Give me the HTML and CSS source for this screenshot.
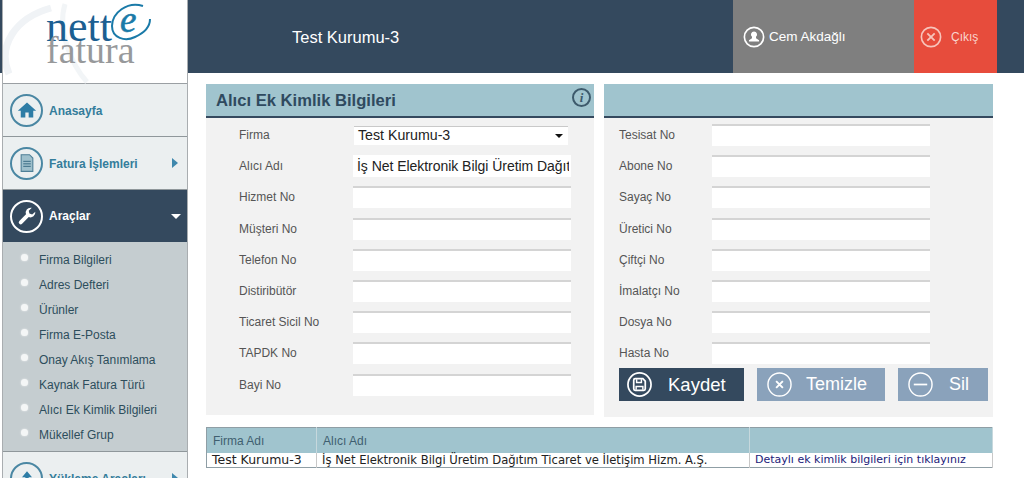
FILE: index.html
```html
<!DOCTYPE html>
<html lang="tr">
<head>
    <meta charset="UTF-8">
    <meta name="viewport" content="width=device-width, initial-scale=1.0">
    <link rel="stylesheet" href="styles.css">
    <title>Nette Fatura - Alıcı Ek Kimlik Bilgileri</title>
</head>
<body>
<div class="page">
    <aside class="sidebar">
        <div class="logo">
            <svg class="logo-swirl" viewBox="0 0 186 84" aria-hidden="true">
                <path d="M6 74C-6 46 12 18 48 8" fill="none" stroke="#f0f3f6" stroke-width="7"/>
                <path d="M62 4C54 30 68 64 84 82" fill="none" stroke="#f2f5f7" stroke-width="5"/>
                <path d="M140 6C124 1 109 13 109 26C109 38 122 42 132 37C141 33 147 27 147 19" fill="none" stroke="#1a7aa8" stroke-width="2"/>
            </svg>
            <span class="logo-nett">nett</span>
            <span class="logo-e">e</span>
            <span class="logo-fatura">fatura</span>
        </div>
        <a class="menu-item" href="#">
            <span class="menu-icon">
                <svg viewBox="0 0 24 24"><path d="M12 3 1 13h3.500v8h5.500v-6h4v6h5.500v-8H23z" fill="#2e7da6"/></svg>
            </span>
            <span class="menu-label">Anasayfa</span>
        </a>
        <a class="menu-item" href="#">
            <span class="menu-icon">
                <svg viewBox="0 0 24 24"><path d="M5 2h10l4 4v16H5z" fill="#9fc0cc" stroke="#4d7f97" stroke-width="1.300"/><path d="M7.500 10h9M7.500 13h9M7.500 16h9" stroke="#3b6d85" stroke-width="1.200"/></svg>
            </span>
            <span class="menu-label">Fatura İşlemleri</span>
            <span class="arrow-right"></span>
        </a>
        <a class="menu-item menu-item-active" href="#">
            <span class="menu-icon">
                <svg viewBox="0 0 24 24"><path d="M17 2a6 6 0 0 0-6.200 8L2.800 18a2.300 2.300 0 0 0 3.300 3.300l8-8A6 6 0 0 0 22 7l-3.800 3.200-3.300-1.100-.8-3.300L17.800 2z" fill="#fff"/></svg>
            </span>
            <span class="menu-label">Araçlar</span>
            <span class="arrow-down"></span>
        </a>
        <ul class="submenu">
            <li>Firma Bilgileri</li>
            <li>Adres Defteri</li>
            <li>Ürünler</li>
            <li>Firma E-Posta</li>
            <li>Onay Akış Tanımlama</li>
            <li>Kaynak Fatura Türü</li>
            <li>Alıcı Ek Kimlik Bilgileri</li>
            <li>Mükellef Grup</li>
        </ul>
        <a class="menu-item" href="#">
            <span class="menu-icon">
                <svg viewBox="0 0 24 24"><path d="M12 4 6 11h4v8h4v-8h4z" fill="#2e7da6"/></svg>
            </span>
            <span class="menu-label">Yükleme Araçları</span>
            <span class="arrow-right"></span>
        </a>
    </aside>

    <div class="main">
        <header class="topbar">
            <div class="topbar-title">Test Kurumu-3</div>
            <div class="topbar-user">
                <svg class="topbar-icon" viewBox="0 0 24 24"><circle cx="12" cy="12" r="10.500" fill="none" stroke="#fff" stroke-width="1.800"/><path d="M12 6a3.300 3.300 0 0 1 2.200 5.800v1.500l3.300 2.200V17h-11v-1.500l3.300-2.200v-1.500A3.300 3.300 0 0 1 12 6z" fill="#fff"/></svg>
                Cem Akdağlı
            </div>
            <div class="topbar-exit">
                <svg class="topbar-icon" viewBox="0 0 24 24"><circle cx="12" cy="12" r="10.500" fill="none" stroke="#f7c4bb" stroke-width="1.800"/><path d="M8 8l8 8M16 8l-8 8" stroke="#f7c4bb" stroke-width="2"/></svg>
                Çıkış
            </div>
        </header>

        <div class="content">
            <div class="panels">
                <section class="panel panel-left">
                    <div class="panel-head">
                        <h1>Alıcı Ek Kimlik Bilgileri</h1>
                        <span class="info-icon">i</span>
                    </div>
                    <div class="form-rows">
                        <div class="form-row"><label>Firma</label><div class="select-box">Test Kurumu-3<span class="select-arrow"></span></div></div>
                        <div class="form-row"><label>Alıcı Adı</label><input class="text-input filled" type="text" value="İş Net Elektronik Bilgi Üretim Dağıtım Ticaret ve İletişim Hizm. A.Ş."></div>
                        <div class="form-row"><label>Hizmet No</label><input class="text-input" type="text"></div>
                        <div class="form-row"><label>Müşteri No</label><input class="text-input" type="text"></div>
                        <div class="form-row"><label>Telefon No</label><input class="text-input" type="text"></div>
                        <div class="form-row"><label>Distiribütör</label><input class="text-input" type="text"></div>
                        <div class="form-row"><label>Ticaret Sicil No</label><input class="text-input" type="text"></div>
                        <div class="form-row"><label>TAPDK No</label><input class="text-input" type="text"></div>
                        <div class="form-row"><label>Bayi No</label><input class="text-input" type="text"></div>
                    </div>
                </section>

                <section class="panel panel-right">
                    <div class="panel-head"></div>
                    <div class="form-rows">
                        <div class="form-row"><label>Tesisat No</label><input class="text-input" type="text"></div>
                        <div class="form-row"><label>Abone No</label><input class="text-input" type="text"></div>
                        <div class="form-row"><label>Sayaç No</label><input class="text-input" type="text"></div>
                        <div class="form-row"><label>Üretici No</label><input class="text-input" type="text"></div>
                        <div class="form-row"><label>Çiftçi No</label><input class="text-input" type="text"></div>
                        <div class="form-row"><label>İmalatçı No</label><input class="text-input" type="text"></div>
                        <div class="form-row"><label>Dosya No</label><input class="text-input" type="text"></div>
                        <div class="form-row"><label>Hasta No</label><input class="text-input" type="text"></div>
                    </div>
                    <div class="buttons">
                        <button class="btn btn-save">
                            <svg class="btn-icon" viewBox="0 0 26 26"><circle cx="13" cy="13" r="12" fill="none" stroke="#fff" stroke-width="1.800"/><path d="M7 8.500A1.500 1.500 0 0 1 8.500 7h8l2.500 2.500v8a1.500 1.500 0 0 1-1.500 1.500h-9A1.500 1.500 0 0 1 7 17.500z" fill="none" stroke="#fff" stroke-width="1.800"/><path d="M10 7.500v3.500h5V7.500M9.500 18.500V15h7v3.500" fill="none" stroke="#fff" stroke-width="1.500"/></svg>
                            Kaydet
                        </button>
                        <button class="btn btn-clear">
                            <svg class="btn-icon" viewBox="0 0 26 26"><circle cx="13" cy="13" r="12" fill="none" stroke="#fff" stroke-width="1.500"/><path d="M9.500 9.500l7 7M16.500 9.500l-7 7" stroke="#fff" stroke-width="2"/></svg>
                            Temizle
                        </button>
                        <button class="btn btn-delete">
                            <svg class="btn-icon" viewBox="0 0 26 26"><circle cx="13" cy="13" r="12" fill="none" stroke="#fff" stroke-width="1.500"/><path d="M6 13h14" stroke="#fff" stroke-width="1.800"/></svg>
                            Sil
                        </button>
                    </div>
                </section>
            </div>

            <table class="result-table">
                <thead>
                    <tr><th class="col-firma">Firma Adı</th><th class="col-alici">Alıcı Adı</th><th></th></tr>
                </thead>
                <tbody>
                    <tr>
                        <td class="cell-firma">Test Kurumu-3</td>
                        <td class="cell-alici">İş Net Elektronik Bilgi Üretim Dağıtım Ticaret ve İletişim Hizm. A.Ş.</td>
                        <td class="detail-link">Detaylı ek kimlik bilgileri için tıklayınız</td>
                    </tr>
                </tbody>
            </table>
        </div>
    </div>
</div>
</body>
</html>
```
FILE: styles.css
```css
html, body {
    margin: 0;
    padding: 0;
    height: 478px;
    overflow: hidden;
    background: #fff;
    font-family: "Liberation Sans", Arial, sans-serif;
}
.page {
    display: flex;
    height: 478px;
    padding-left: 2px;
    box-sizing: border-box;
    background: linear-gradient(#34495e 73px, #fff 73px);
}

/* sidebar */
.sidebar {
    width: 186px;
    flex: none;
    height: 478px;
    overflow: hidden;
    box-sizing: border-box;
    border-right: 1px solid #a9adb0;
    border-left: 1px solid #a9adb0;
    background: #fff;
}
.logo {
    position: relative;
    height: 84px;
    box-sizing: border-box;
    border-bottom: 1px solid #9a9fa3;
}
.logo-swirl {
    position: absolute;
    left: 0;
    top: 0;
    width: 186px;
    height: 84px;
}
.logo-nett, .logo-fatura, .logo-e {
    position: absolute;
    font-family: "Liberation Serif", serif;
}
.logo-nett {
    left: 43px;
    top: 15px;
    font-size: 44px;
    line-height: 24px;
    color: #1b5f92;
}
.logo-fatura {
    left: 43px;
    top: 39px;
    font-size: 38px;
    line-height: 22px;
    color: #97999b;
}
.logo-e {
    left: 117px;
    top: 8px;
    font-size: 37px;
    line-height: 24px;
    font-style: italic;
    -webkit-text-stroke: 0.6px #1a7aa8;
    color: #1a7aa8;
}
.menu-item {
    display: flex;
    align-items: center;
    height: 53px;
    box-sizing: border-box;
    padding-left: 7px;
    border-bottom: 1px solid #8f979b;
    background: #ebeff0;
    color: #347d9b;
    font-size: 12px;
    font-weight: bold;
    text-decoration: none;
}
.menu-item-active {
    height: 52px;
    border-bottom: none;
    background: #34495e;
    color: #fff;
}
.menu-icon {
    display: flex;
    align-items: center;
    justify-content: center;
    width: 33px;
    height: 33px;
    flex: none;
    margin-right: 6px;
    box-sizing: border-box;
    border: 2.500px solid #4a87a3;
    border-radius: 50%;
}
.menu-item-active .menu-icon {
    border-color: #fff;
}
.menu-icon svg {
    width: 20px;
    height: 20px;
}
.menu-label {
    flex: 1;
    padding-top: 2px;
}
.menu-item-active .menu-label {
    padding-top: 0;
}
.arrow-right {
    width: 0;
    height: 0;
    margin-right: 9px;
    border-left: 6px solid #3f88ad;
    border-top: 5px solid transparent;
    border-bottom: 5px solid transparent;
}
.arrow-down {
    width: 0;
    height: 0;
    margin-right: 6px;
    border-top: 5px solid #fff;
    border-left: 5px solid transparent;
    border-right: 5px solid transparent;
}
.submenu {
    list-style: none;
    margin: 0;
    padding: 6px 0 5px;
    height: 210px;
    box-sizing: border-box;
    background: #c5cdd0;
    border-bottom: 1px solid #8f979b;
}
.submenu li {
    position: relative;
    height: 25px;
    line-height: 25px;
    padding-left: 36px;
    font-size: 12px;
    color: #2d4d5c;
}
.submenu li::before {
    content: "";
    position: absolute;
    left: 18px;
    top: 6px;
    width: 7px;
    height: 7px;
    border-radius: 50%;
    background: #f4f6f6;
    box-shadow: 0 0 2px #f4f6f6;
}

/* header */
.main {
    flex: 1;
    min-width: 0;
}
.topbar {
    display: flex;
    height: 73px;
    width: 809px;
    color: #fff;
    background: #34495e;
}
.topbar-title {
    width: 545px;
    padding-left: 104px;
    box-sizing: border-box;
    line-height: 75px;
    font-size: 16.500px;
}
.topbar-user, .topbar-exit {
    display: flex;
    align-items: center;
    box-sizing: border-box;
}
.topbar-user {
    width: 181px;
    padding-left: 10px;
    font-size: 13.500px;
    background: #7f7f7f;
}
.topbar-exit {
    width: 83px;
    padding-left: 6px;
    font-size: 12px;
    background: #e74c3c;
    color: #f9d5ce;
}
.topbar-icon {
    width: 22px;
    height: 22px;
    margin-right: 4px;
}
.topbar-exit .topbar-icon {
    margin-right: 9px;
}

/* panels */
.content {
    width: 787px;
    margin-left: 18px;
}
.panels {
    display: flex;
    gap: 10px;
    margin-top: 11px;
}
.panel {
    width: 388px;
    background: #f2f2f2;
}
.panel-left {
    height: 331px;
}
.panel-right {
    width: 389px;
    height: 333px;
}
.panel-head {
    position: relative;
    height: 34px;
    box-sizing: border-box;
    border-bottom: 2px solid #34495e;
    background: #a0c4ce;
}
.panel-head h1 {
    margin: 0;
    padding-left: 10px;
    font-size: 16.600px;
    line-height: 33px;
    color: #2f4a5f;
}
.info-icon {
    position: absolute;
    right: 3px;
    top: 4px;
    width: 15px;
    height: 15px;
    border: 2px solid #3d5a6c;
    border-radius: 50%;
    text-align: center;
    font: italic bold 13px/15px "Liberation Serif", serif;
    color: #3d5a6c;
}
.form-rows {
    display: flex;
    flex-direction: column;
    gap: 9.200px;
    padding-top: 6px;
}
.form-row {
    display: flex;
    align-items: center;
    height: 22px;
}
.form-row label {
    width: 147px;
    padding-left: 33px;
    box-sizing: border-box;
    font-size: 12px;
    color: #555;
}
.panel-right .form-row label {
    width: 108px;
    padding-left: 15px;
}
.text-input {
    width: 218px;
    height: 22px;
    padding: 0 2px 0 4px;
    box-sizing: border-box;
    border: none;
    border-top: 2px solid #d4d4d4;
    background: #fff;
    font-family: "Liberation Sans", Arial, sans-serif;
}
.filled {
    font-size: 14px;
    letter-spacing: -0.04px;
    line-height: 18px;
    border-top: none;
    color: #222;
}
.select-box {
    position: relative;
    width: 214px;
    height: 19px;
    margin-left: 1px;
    padding-left: 4px;
    box-sizing: border-box;
    border-top: 1px solid #c9c9c9;
    background: #fff;
    font-size: 14.200px;
    line-height: 17px;
    color: #222;
}
.select-arrow {
    position: absolute;
    right: 5px;
    top: 7px;
    border-top: 4px solid #111;
    border-left: 4px solid transparent;
    border-right: 4px solid transparent;
}

/* buttons */
.buttons {
    display: flex;
    gap: 13px;
    margin-top: 4px;
    padding-left: 15px;
}
.btn {
    display: flex;
    align-items: center;
    height: 33px;
    padding: 0 0 0 10px;
    border: none;
    color: #fff;
    font: 18px "Liberation Sans", Arial, sans-serif;
}
.btn-icon {
    width: 25px;
    height: 25px;
    margin-right: 16px;
}
.btn-save {
    width: 125px;
    padding-left: 8px;
    font-size: 18.500px;
    background: #34495e;
}
.btn-clear {
    width: 128px;
    background: #8aa2bb;
}
.btn-clear .btn-icon {
    margin-right: 14px;
}
.btn-delete {
    width: 90px;
    background: #8aa2bb;
}

/* table */
.result-table {
    width: 787px;
    margin-top: 10px;
    table-layout: fixed;
    border-collapse: collapse;
    border: 1px solid #8f9ea5;
}
.result-table th {
    height: 25px;
    padding: 0 6px;
    background: #a0c4ce;
    border-right: 1px solid #c6d8dd;
    text-align: left;
    font-size: 12px;
    font-weight: normal;
    color: #3f5f70;
}
.result-table td {
    height: 14px;
    padding: 0 5px;
    border-right: 1px solid #c8c8c8;
    font-family: "DejaVu Sans", Verdana, sans-serif;
    font-size: 11px;
    line-height: 14px;
    white-space: nowrap;
    color: #222;
}
.col-firma {
    width: 97px;
}
.col-alici {
    width: 420px;
}
.result-table .cell-firma {
    font-size: 12.500px;
}
.result-table .cell-alici {
    font-size: 11.600px;
}
.result-table .detail-link {
    color: #22227a;
}
```
